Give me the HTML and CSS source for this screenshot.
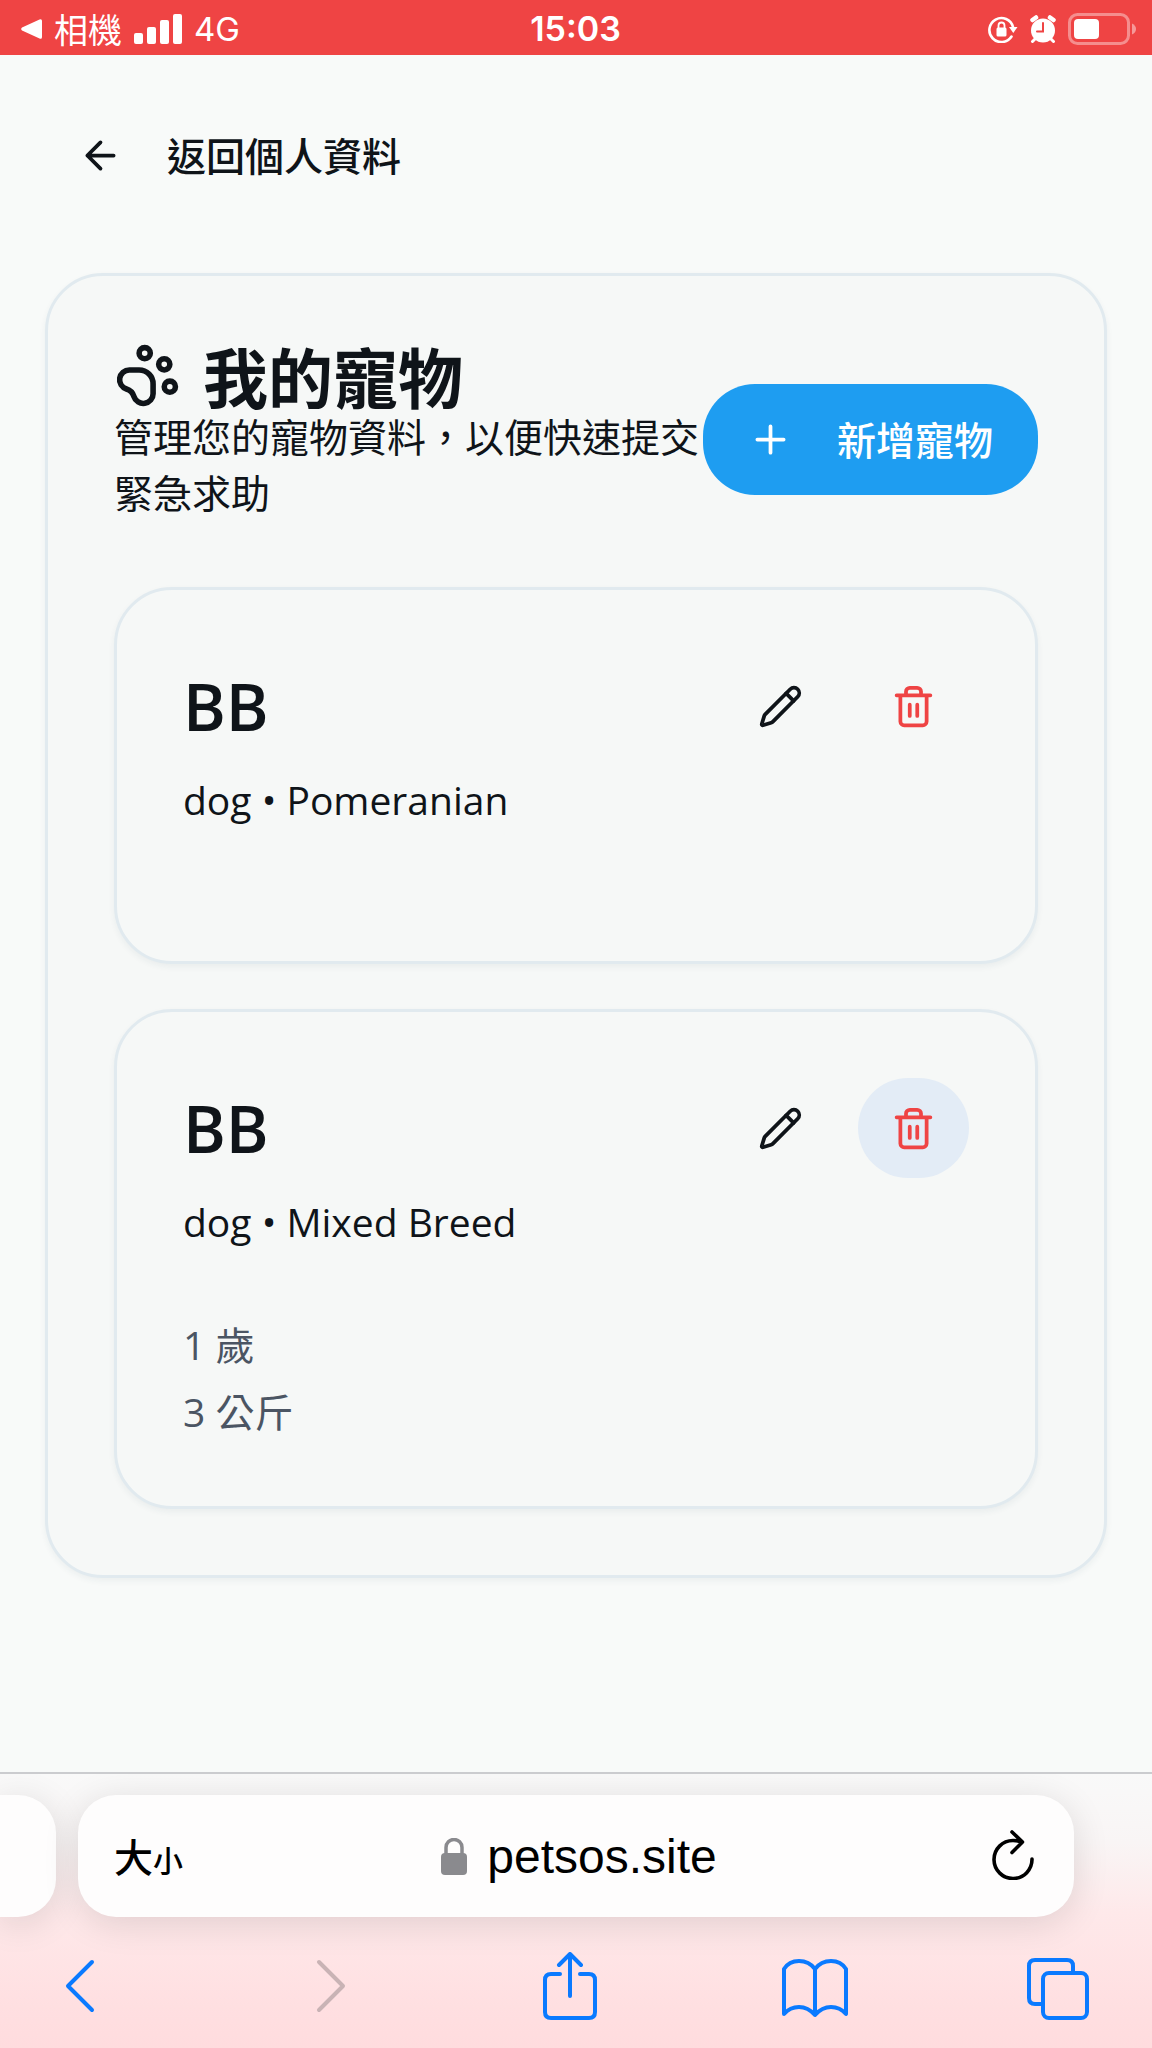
FILE: index.html
```html
<!DOCTYPE html>
<html lang="zh-Hant">
<head>
<meta charset="utf-8">
<meta name="viewport" content="width=device-width, initial-scale=1">
<title>我的寵物</title>
<link rel="stylesheet" href="styles.css">
</head>
<body>
<svg class="sprite" aria-hidden="true">
  <symbol id="pencil" viewBox="0 0 24 24"><path d="M21.174 6.812a1 1 0 0 0-3.986-3.987L3.842 16.174a2 2 0 0 0-.5.83l-1.321 4.352a.5.5 0 0 0 .623.622l4.353-1.32a2 2 0 0 0 .83-.497z"/><path d="m15 5 4 4"/></symbol>
  <symbol id="trash" viewBox="0 0 24 24"><path d="M3 6h18M19 6v14c0 1-1 2-2 2H7c-1 0-2-1-2-2V6M8 6V4c0-1 1-2 2-2h4c1 0 2 1 2 2v2M10 11v6M14 11v6"/></symbol>
</svg>

<header class="status">
  <div class="status-left">
    <svg width="21" height="20" viewBox="0 0 21 20" fill="#fff"><path d="M1 8.600Q-.6 10 1 11.400L18.500 19.600Q21 20.500 21 18V2Q21-.5 18.500.4Z"/></svg>
    <span class="status-app">相機</span>
    <svg class="signal" width="48" height="30" viewBox="0 0 48 30" fill="#fff"><rect y="19" width="9" height="11" rx="2"/><rect x="13" y="13" width="9" height="17" rx="2"/><rect x="26" y="6" width="9" height="24" rx="2"/><rect x="39" width="9" height="30" rx="2"/></svg>
    <span class="status-net">4G</span>
  </div>
  <time class="status-time">15:03</time>
  <div class="status-right">
    <svg width="30" height="28" viewBox="0 0 30 28"><path d="M25 11A12 12 0 1 0 23.500 20.500" transform="translate(0 1)" fill="none" stroke="#fff" stroke-width="2.600" stroke-linecap="round"/><path d="M21 12h8.500l-4.200 6z" fill="#fff"/><rect x="8.500" y="12.500" width="10" height="9" rx="1.500" fill="#fff"/><path d="M10.500 13v-2.500a3 3 0 0 1 6 0V13" fill="none" stroke="#fff" stroke-width="1.800"/></svg>
    <svg width="26" height="28" viewBox="0 0 26 28"><circle cx="13" cy="15.500" r="12" fill="#fff"/><path d="M2.500 5 6 2.500M23.500 5 20 2.500" stroke="#fff" stroke-width="4.500" stroke-linecap="round"/><path d="m5 24-2.500 2.500M21 24l2.500 2.500" stroke="#fff" stroke-width="3" stroke-linecap="round"/><path d="M13 8v8.500H7" fill="none" stroke="#ef4444" stroke-width="2" stroke-linecap="round"/></svg>
    <svg width="68" height="32" viewBox="0 0 68 32"><rect x="1.500" y="1.500" width="59" height="29" rx="8" fill="none" stroke="#fff" stroke-opacity=".4" stroke-width="3"/><path d="M64 10.500q4 2 4 5.500t-4 5.500z" fill="#fff" fill-opacity=".45"/><rect x="6" y="6" width="25" height="20" rx="4" fill="#fff"/></svg>
  </div>
</header>

<main class="page">
  <a class="back" href="#profile">
    <svg class="icon" viewBox="0 0 24 24"><path d="m12 19-7-7 7-7M19 12H5"/></svg>
    <span>返回個人資料</span>
  </a>

  <section class="panel">
    <div class="panel-head">
      <div class="panel-text">
        <h1 class="title">
          <svg class="icon icon-title" viewBox="0 0 24 24"><circle cx="11" cy="4" r="2"/><circle cx="18" cy="8" r="2"/><circle cx="20" cy="16" r="2"/><path d="M9 10a5 5 0 0 1 5 5v3.500a3.500 3.500 0 0 1-6.840 1.045Q6.520 17.480 4.460 16.840A3.500 3.500 0 0 1 5.500 10Z"/></svg>
          <span>我的寵物</span>
        </h1>
        <p class="text">管理您的寵物資料，以便快速提交緊急求助</p>
      </div>
      <button class="add" type="button">
        <svg class="icon" viewBox="0 0 24 24"><path d="M5 12h14M12 5v14"/></svg>
        <span>新增寵物</span>
      </button>
    </div>

    <div class="pets">
      <article class="pet">
        <div class="pet-head">
          <h2 class="pet-name">BB</h2>
          <div class="pet-actions">
            <button class="action" type="button" aria-label="編輯"><svg class="icon"><use href="#pencil"/></svg></button>
            <button class="action action-delete" type="button" aria-label="刪除"><svg class="icon"><use href="#trash"/></svg></button>
          </div>
        </div>
        <p class="text">dog • Pomeranian</p>
        <div class="facts"></div>
      </article>

      <article class="pet">
        <div class="pet-head">
          <h2 class="pet-name">BB</h2>
          <div class="pet-actions">
            <button class="action" type="button" aria-label="編輯"><svg class="icon"><use href="#pencil"/></svg></button>
            <button class="action action-delete is-active" type="button" aria-label="刪除"><svg class="icon"><use href="#trash"/></svg></button>
          </div>
        </div>
        <p class="text">dog • Mixed Breed</p>
        <div class="facts">
          <p>1 歲</p>
          <p>3 公斤</p>
        </div>
      </article>
    </div>
  </section>
</main>

<footer class="browser">
  <div class="tabs">
    <div class="tab-prev"></div>
    <div class="address">
      <button class="plain text-size" type="button"><span>大</span><span class="small">小</span></button>
      <button class="plain url" type="button">
        <svg width="26" height="38" viewBox="0 0 26 38"><rect y="15" width="26" height="22" rx="4" fill="#8a8a8e"/><path d="M5 17V9.500a8 8 0 0 1 16 0V17" fill="none" stroke="#8a8a8e" stroke-width="3.500"/></svg>
        <span>petsos.site</span>
      </button>
      <button class="plain reload" type="button" aria-label="重新載入">
        <svg width="42" height="50" viewBox="0 0 42 50" fill="none" stroke="#000" stroke-width="3.600" stroke-linecap="round" stroke-linejoin="round"><path d="M40 29A19 19 0 1 1 21 10.500q4 0 8.500 1.200M20 2l10.500 10L20 22.500"/></svg>
      </button>
    </div>
  </div>
  <nav class="toolbar">
    <button class="plain tool" type="button" aria-label="上一頁"><svg viewBox="0 0 68 68"><path d="M46 10 22 34l24 24"/></svg></button>
    <button class="plain tool tool-off" type="button" aria-label="下一頁" disabled><svg viewBox="0 0 68 68"><path d="m28 10 24 24-24 24"/></svg></button>
    <button class="plain tool" type="button" aria-label="分享"><svg viewBox="0 0 68 68"><path d="M25 22H16q-6 0-6 6v32q0 6 6 6h38q6 0 6-6V28q0-6-6-6h-9M35 44V3M24 13 35 2l11 11"/></svg></button>
    <button class="plain tool" type="button" aria-label="書籤"><svg viewBox="0 0 68 68"><path d="M35 17v46M35 17Q29 9 19 9T4 17v45Q10 55 19 55t16 8q7-8 16-8t15 7V17q-5-8-15-8t-16 8"/></svg></button>
    <button class="plain tool" type="button" aria-label="分頁"><svg viewBox="0 0 68 68"><rect x="19" y="21" width="44" height="45" rx="6"/><path d="M49 21v-7q0-6-6-6H11q-6 0-6 6v32q0 6 6 6h8"/></svg></button>
  </nav>
</footer>
</body>
</html>
```
FILE: styles.css
```css
:root {
  --ink: #0f1419;
  --line: #e1eaef;
  --surface: #f6f8f7;
  --primary: #1e9df1;
  --danger: #ef4444;
  --ios-blue: #0a7aff;
}

* { box-sizing: border-box; }

body {
  margin: 0;
  min-height: 100vh;
  display: flex;
  flex-direction: column;
  background: #f8faf9;
  color: var(--ink);
  font: 400 39px/56px "Open Sans", "Noto Sans CJK TC", sans-serif;
}

h1, h2, p { margin: 0; }
button { font: inherit; color: inherit; border: 0; cursor: pointer; }
svg { flex: none; display: block; }
.sprite { position: absolute; width: 0; height: 0; }

.icon {
  width: 45px;
  height: 45px;
  fill: none;
  stroke: currentColor;
  stroke-width: 2;
  stroke-linecap: round;
  stroke-linejoin: round;
}

/* Status bar */
.status {
  display: grid;
  grid-template-columns: 1fr auto 1fr;
  align-items: center;
  height: 55px;
  padding: 2px 16px 0 15px;
  background: var(--danger);
  color: #fff;
  font-family: Inter, "Noto Sans CJK TC", sans-serif;
  font-size: 33px;
  line-height: 48px;
}
.status-left, .status-right { display: flex; align-items: center; gap: 12px; }
.status-left { padding-left: 6px; }
.status-right { justify-content: flex-end; }
.status-app { font-family: "Noto Sans CJK TC", sans-serif; font-size: 34px; }
.status-time { font-size: 34px; font-weight: 600; }

/* Page */
.page { flex: 1; padding: 45px; }
.back {
  display: inline-flex;
  align-items: center;
  gap: 44px;
  height: 111px;
  padding: 0 33px;
  color: inherit;
  font-weight: 500;
  text-decoration: none;
  vertical-align: top;
}

.panel, .pet {
  padding: 66px;
  border: 3px solid var(--line);
  border-radius: 58px;
  background: var(--surface);
  box-shadow: 0 3px 6px rgba(30, 60, 90, .06);
}
.panel { margin-top: 62px; }

.panel-head { display: flex; align-items: center; justify-content: space-between; }
.panel-text { flex: 1; min-width: 0; }
.title {
  display: flex;
  align-items: center;
  gap: 22px;
  font-family: "Noto Sans CJK TC", sans-serif;
  font-size: 65px;
  font-weight: 600;
  line-height: 67px;
}
.icon-title { width: 67px; height: 67px; }

.add {
  flex: none;
  display: flex;
  align-items: center;
  gap: 44px;
  height: 111px;
  margin-top: 16px;
  padding: 0 45px;
  border-radius: 52px;
  background: var(--primary);
  color: #fff;
  font-weight: 500;
}

.pets { display: grid; gap: 45px; margin-top: 66px; }
.pet-head {
  display: flex;
  align-items: center;
  justify-content: space-between;
  margin-bottom: 16px;
}
.pet-name { font-size: 65px; font-weight: 600; line-height: 67px; }
.pet-actions { display: flex; gap: 22px; }
.action {
  display: grid;
  place-items: center;
  width: 111px;
  height: 100px;
  border-radius: 52px;
  background: transparent;
}
.action-delete { color: var(--danger); }
.is-active { background: #e3ecf6; }
.facts { display: grid; gap: 11px; margin-top: 67px; color: #4b5563; }

/* Browser chrome */
.browser {
  overflow: hidden;
  border-top: 2px solid #cbcccf;
  background: linear-gradient(#f9f9f9 0, #f9f5f5 25%, #fee9ea 50%, #ffdfe1 85%, #ffdcde 100%);
}
.tabs { display: flex; gap: 22px; padding: 21px 78px 0 0; }
.tab-prev, .address {
  height: 122px;
  background: #fefdfd;
  box-shadow: 0 6px 36px rgba(0, 0, 0, .12);
}
.tab-prev { flex: none; width: 56px; border-radius: 0 38px 38px 0; }
.address {
  flex: 1;
  display: grid;
  grid-template-columns: 1fr auto 1fr;
  align-items: center;
  padding: 2px 40px 0 36px;
  border-radius: 38px;
  color: #000;
}
.plain { padding: 0; background: none; }
.text-size {
  justify-self: start;
  display: flex;
  align-items: baseline;
  font-family: "Noto Sans CJK TC", sans-serif;
  font-weight: 500;
}
.small { font-size: 30px; }
.url {
  display: flex;
  align-items: center;
  gap: 20px;
  padding-left: 10px;
  font-family: "Liberation Sans", sans-serif;
  font-size: 48px;
}
.reload { justify-self: end; }
.reload svg { margin-bottom: 4px; }
.toolbar { display: flex; justify-content: space-between; padding: 35px 60px 28px 46px; }
.tool { width: 68px; height: 68px; color: var(--ios-blue); }
.tool svg {
  width: 68px;
  height: 68px;
  fill: none;
  stroke: currentColor;
  stroke-width: 4;
  stroke-linecap: round;
  stroke-linejoin: round;
}
.tool-off { color: #c9b3b5; }
```
